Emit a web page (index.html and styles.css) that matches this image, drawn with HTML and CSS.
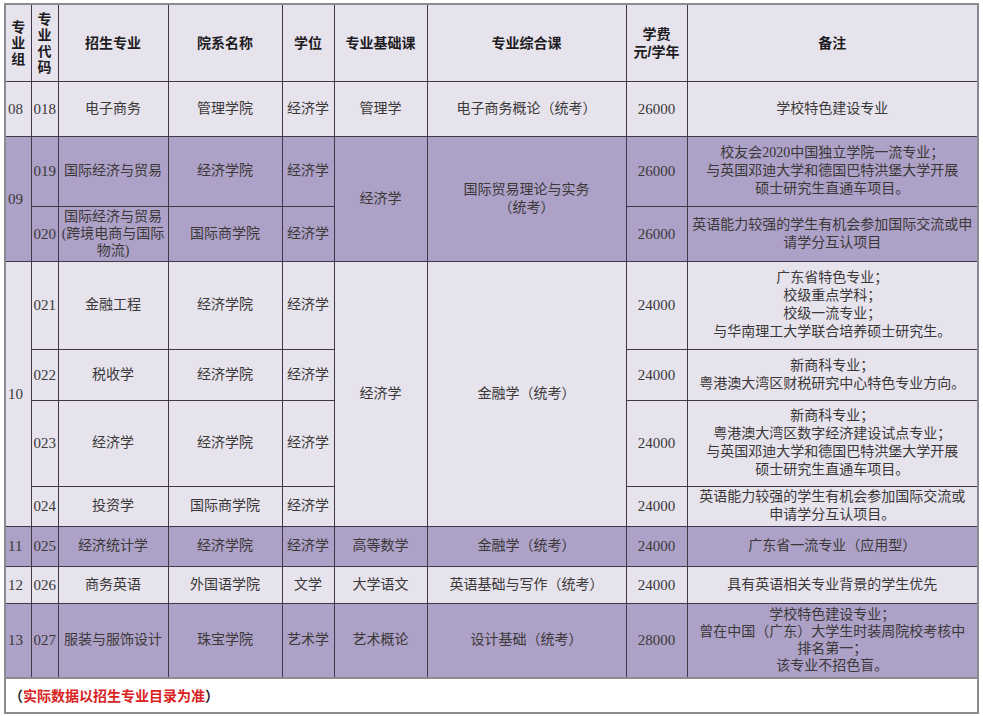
FILE: index.html
```html
<!DOCTYPE html>
<html lang="zh-CN">
<head>
<meta charset="utf-8">
<title>招生专业</title>
<link rel="stylesheet" href="styles.css">
</head>
<body>
<div class="page">
<table class="plan">
  <colgroup>
    <col class="c-group"><col class="c-code"><col class="c-major"><col class="c-dept"><col class="c-degree"><col class="c-base"><col class="c-comp"><col class="c-fee"><col class="c-note">
  </colgroup>
  <thead>
    <tr class="r-head light">
      <th class="stack">专<br>业<br>组</th>
      <th class="stack">专<br>业<br>代<br>码</th>
      <th>招生专业</th>
      <th>院系名称</th>
      <th>学位</th>
      <th>专业基础课</th>
      <th>专业综合课</th>
      <th>学费<br>元/学年</th>
      <th>备注</th>
    </tr>
  </thead>
  <tbody>
    <tr class="r-08 light">
      <td class="num">08</td>
      <td class="num">018</td>
      <td>电子商务</td>
      <td>管理学院</td>
      <td>经济学</td>
      <td>管理学</td>
      <td>电子商务概论（统考）</td>
      <td class="fee">26000</td>
      <td>学校特色建设专业</td>
    </tr>
    <tr class="r-019 purple">
      <td class="num" rowspan="2">09</td>
      <td class="num">019</td>
      <td>国际经济与贸易</td>
      <td>经济学院</td>
      <td>经济学</td>
      <td rowspan="2">经济学</td>
      <td rowspan="2">国际贸易理论与实务<br>（统考）</td>
      <td class="fee">26000</td>
      <td>校友会2020中国独立学院一流专业；<br>与英国邓迪大学和德国巴特洪堡大学开展<br>硕士研究生直通车项目。</td>
    </tr>
    <tr class="r-020 purple">
      <td class="num">020</td>
      <td class="tight">国际经济与贸易<br>(跨境电商与国际<br>物流)</td>
      <td>国际商学院</td>
      <td>经济学</td>
      <td class="fee">26000</td>
      <td>英语能力较强的学生有机会参加国际交流或申<br>请学分互认项目</td>
    </tr>
    <tr class="r-021 light">
      <td class="num" rowspan="4">10</td>
      <td class="num">021</td>
      <td>金融工程</td>
      <td>经济学院</td>
      <td>经济学</td>
      <td rowspan="4">经济学</td>
      <td rowspan="4">金融学（统考）</td>
      <td class="fee">24000</td>
      <td>广东省特色专业；<br>校级重点学科；<br>校级一流专业；<br>与华南理工大学联合培养硕士研究生。</td>
    </tr>
    <tr class="r-022 light">
      <td class="num">022</td>
      <td>税收学</td>
      <td>经济学院</td>
      <td>经济学</td>
      <td class="fee">24000</td>
      <td>新商科专业；<br>粤港澳大湾区财税研究中心特色专业方向。</td>
    </tr>
    <tr class="r-023 light">
      <td class="num">023</td>
      <td>经济学</td>
      <td>经济学院</td>
      <td>经济学</td>
      <td class="fee">24000</td>
      <td>新商科专业；<br>粤港澳大湾区数字经济建设试点专业；<br>与英国邓迪大学和德国巴特洪堡大学开展<br>硕士研究生直通车项目。</td>
    </tr>
    <tr class="r-024 light">
      <td class="num">024</td>
      <td>投资学</td>
      <td>国际商学院</td>
      <td>经济学</td>
      <td class="fee">24000</td>
      <td>英语能力较强的学生有机会参加国际交流或<br>申请学分互认项目。</td>
    </tr>
    <tr class="r-11 purple">
      <td class="num">11</td>
      <td class="num">025</td>
      <td>经济统计学</td>
      <td>经济学院</td>
      <td>经济学</td>
      <td>高等数学</td>
      <td>金融学（统考）</td>
      <td class="fee">24000</td>
      <td>广东省一流专业（应用型）</td>
    </tr>
    <tr class="r-12 light">
      <td class="num">12</td>
      <td class="num">026</td>
      <td>商务英语</td>
      <td>外国语学院</td>
      <td>文学</td>
      <td>大学语文</td>
      <td>英语基础与写作（统考）</td>
      <td class="fee">24000</td>
      <td>具有英语相关专业背景的学生优先</td>
    </tr>
    <tr class="r-13 purple">
      <td class="num">13</td>
      <td class="num">027</td>
      <td>服装与服饰设计</td>
      <td>珠宝学院</td>
      <td>艺术学</td>
      <td>艺术概论</td>
      <td>设计基础（统考）</td>
      <td class="fee">28000</td>
      <td class="tight">学校特色建设专业；<br>曾在中国（广东）大学生时装周院校考核中<br>排名第一；<br>该专业不招色盲。</td>
    </tr>
    <tr class="r-foot">
      <td colspan="9" class="foot"><span class="paren">（</span>实际数据以招生专业目录为准<span class="paren">）</span></td>
    </tr>
  </tbody>
</table>
</div>
</body>
</html>
```

FILE: styles.css
```css
html, body {
  margin: 0;
  padding: 0;
  background: #ffffff;
}

.page {
  padding: 3px 0 0 4px;
}

.plan {
  border-collapse: collapse;
  table-layout: fixed;
  width: 973px;
  font-family: "Liberation Serif", "Noto Sans CJK SC", serif;
  font-size: 14px;
  color: #3b3838;
  border: 2px solid #8c8a90;
}

.c-group { width: 26px; }
.c-code { width: 27px; }
.c-major { width: 110px; }
.c-dept { width: 114px; }
.c-degree { width: 52px; }
.c-base { width: 93px; }
.c-comp { width: 199px; }
.c-fee { width: 61px; }
.c-note { width: 291px; }

.plan th,
.plan td {
  border: 1px solid #3e3848;
  padding: 0 1px;
  text-align: center;
  vertical-align: middle;
  line-height: 18px;
  overflow: hidden;
  white-space: nowrap;
}

.plan th {
  font-family: "Liberation Sans", "Noto Sans CJK SC", sans-serif;
  font-weight: 700;
  font-size: 14px;
  color: #1e1c22;
}

.plan th.stack {
  line-height: 16px;
}

.light td,
.light th {
  background: #e6e3ed;
}

.purple td {
  background: #ada1c7;
}

.plan td.num {
  text-align: left;
  padding-left: 2px;
  font-size: 15px;
}

.plan td.fee {
  font-size: 15px;
}

.plan td.tight {
  line-height: 17px;
}

.r-head { height: 77px; }
.r-08 { height: 55px; }
.r-019 { height: 70px; }
.r-020 { height: 55px; }
.r-021 { height: 88px; }
.r-022 { height: 51px; }
.r-023 { height: 86px; }
.r-024 { height: 40px; }
.r-11 { height: 40px; }
.r-12 { height: 37px; }
.r-13 { height: 75px; }
.r-foot { height: 35px; }

.plan td.foot {
  background: #ffffff;
  text-align: left;
  padding-left: 3px;
  font-family: "Liberation Sans", "Noto Sans CJK SC", sans-serif;
  font-weight: 700;
  font-size: 14px;
  color: #d8231f;
  border-color: #8c8a90;
  border-width: 2px;
}

.paren {
  color: #2a2a2a;
}
```
